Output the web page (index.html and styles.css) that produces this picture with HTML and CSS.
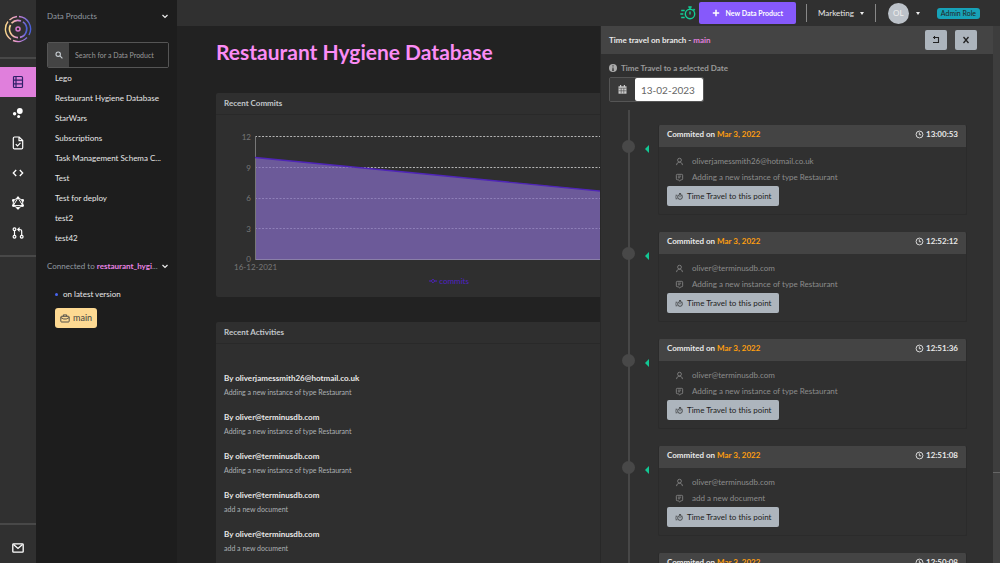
FILE: index.html
```html
<!DOCTYPE html>
<html lang="en">
<head>
<meta charset="utf-8">
<title>Restaurant Hygiene Database</title>
<link rel="stylesheet" href="styles.css">
</head>
<body>
<svg class="sprite" aria-hidden="true">
  <symbol id="chevron" viewBox="0 0 8 8"><path d="M1.500 3 4 5.500l2.500-2.500" fill="none" stroke="currentColor" stroke-width="1.200"/></symbol>
  <symbol id="user" viewBox="0 0 10 10"><circle cx="5" cy="3.500" r="2.100" fill="none" stroke="currentColor" stroke-width=".9"/><path d="M1.800 9c0-2 1.200-3.200 3.200-3.200S8.200 7 8.200 9" fill="none" stroke="currentColor" stroke-width=".9"/></symbol>
  <symbol id="note" viewBox="0 0 10 10"><path d="M2.500 1.500h5q1 0 1 1v4q0 1-1 1h-.8L5 9 3.900 7.500H2.500q-1 0-1-1v-4q0-1 1-1zM3.200 3.500h3.600M3.200 5.300h2.600" fill="none" stroke="currentColor" stroke-width=".9"/></symbol>
  <symbol id="clock" viewBox="0 0 10 10"><circle cx="5" cy="5" r="3.800" fill="none" stroke="currentColor" stroke-width="1"/><path d="M4.800 2.600v2.700h2" fill="none" stroke="currentColor" stroke-width="1"/></symbol>
  <symbol id="stopwatch" viewBox="0 0 16 14"><g fill="none" stroke="currentColor" stroke-width="1.400"><circle cx="10" cy="8" r="4.700"/><path d="M8.300 1h3.400M10 1v2M10 5.500v3M13.500 3l1.300 1.200M1.200 4.500h3.500M.3 8h3M1.200 11.500h3.500"/></g></symbol>
</svg>

<div class="app">
  <nav class="rail" aria-label="Main">
    <a class="logo" href="#" aria-label="Home">
      <svg viewBox="0 0 28 28" width="28" height="28" fill="none" stroke-width="1.400">
        <defs><linearGradient id="ring" x1="0" x2="1"><stop offset="0" stop-color="#fbd98b"/><stop offset=".5" stop-color="#e08ad8"/><stop offset="1" stop-color="#4a5fd8"/></linearGradient></defs>
        <path d="M15 1.500A12.500 12.500 0 0 1 25 20M23 22.500A12.500 12.500 0 0 1 9 25.500M7 24.500A12.500 12.500 0 0 1 4 6.500M5.500 5A12.500 12.500 0 0 1 13 1.500" stroke="url(#ring)"/>
        <path d="M19 6.900A8.600 8.600 0 0 1 16 22.400M14 22.600A8.600 8.600 0 0 1 6.500 10M7.500 8.300A8.600 8.600 0 0 1 17 6" stroke="url(#ring)" stroke-width="1.700"/>
        <circle cx="14" cy="14" r="2" stroke="#d77ad0" stroke-width="1.500"/>
      </svg>
    </a>
    <div class="rail-group">
      <a class="rail-item active" href="#" aria-label="Products"><svg width="12" height="14" viewBox="0 0 12 14" fill="none" stroke="#30206a" stroke-width="1.200"><rect x="1.500" y="1.500" width="9" height="11" rx="1"/><path d="M1.500 5.100h9M1.500 8.800h9M4 1.500v11"/></svg></a>
      <a class="rail-item" href="#" aria-label="Explorer"><svg width="12" height="12" viewBox="0 0 12 12" fill="#fff"><circle cx="7.800" cy="4" r="2.900"/><circle cx="2.600" cy="6.700" r="1.700"/><circle cx="6.600" cy="9.500" r="1.500"/></svg></a>
      <a class="rail-item" href="#" aria-label="Documents"><svg width="12" height="14" viewBox="0 0 12 14" fill="none" stroke="#fff" stroke-width="1.200"><path d="M2.500 1h4.700l3.500 3.500v7.200q0 1.200-1.200 1.200h-7q-1.200 0-1.200-1.200V2.200Q1.300 1 2.500 1zM7 1v3.700h3.700M3.800 8.200l1.700 1.700 3-3"/></svg></a>
      <a class="rail-item" href="#" aria-label="Query"><svg width="12" height="12" viewBox="0 0 12 12" fill="none" stroke="#fff" stroke-width="1.300"><path d="M4.200 3 1.300 6l2.900 3M7.800 3l2.900 3-2.900 3"/></svg></a>
      <a class="rail-item" href="#" aria-label="GraphQL"><svg width="14" height="14" viewBox="0 0 14 14" fill="none" stroke="#fff" stroke-width="1"><path d="M7 1.800l4.700 2.600v5.200L7 12.200 2.300 9.600V4.400zM7 1.800l4.700 7.800H2.300z"/><g fill="#fff" stroke="none"><circle cx="7" cy="1.800" r="1.300"/><circle cx="11.700" cy="4.400" r="1.300"/><circle cx="11.700" cy="9.600" r="1.300"/><circle cx="7" cy="12.200" r="1.300"/><circle cx="2.300" cy="9.600" r="1.300"/><circle cx="2.300" cy="4.400" r="1.300"/></g></svg></a>
      <a class="rail-item" href="#" aria-label="Change requests"><svg width="12" height="12" viewBox="0 0 12 12" fill="none" stroke="#fff" stroke-width="1.200"><circle cx="2.500" cy="2.300" r="1.400"/><circle cx="2.500" cy="9.700" r="1.400"/><circle cx="9.700" cy="9.700" r="1.400"/><path d="M2.500 3.700v4.600M9.700 8.300V4.500q0-2-2-2H6M7.600.7 5.800 2.500l1.800 1.800"/></svg></a>
    </div>
    <a class="rail-mail" href="#" aria-label="Mail"><svg width="12" height="10" viewBox="0 0 12 10" fill="none" stroke="#fff" stroke-width="1.300"><rect x=".8" y=".8" width="10.400" height="8.400" rx=".8"/><path d="M1.500 1.500 6 5.500l4.500-4"/></svg></a>
  </nav>

  <aside class="sidebar">
    <button class="section-toggle">Data Products<svg class="chev"><use href="#chevron"/></svg></button>
    <div class="search">
      <label for="product-search" aria-label="Search"><svg width="8" height="8" viewBox="0 0 8 8" fill="none" stroke="#c8ced3" stroke-width="1.100"><circle cx="3.200" cy="3.200" r="2.200"/><path d="M4.900 4.900 7.400 7.400"/></svg></label>
      <input id="product-search" type="text" placeholder="Search for a Data Product">
    </div>
    <ul class="products">
      <li><a href="#">Lego</a></li>
      <li><a href="#">Restaurant Hygiene Database</a></li>
      <li><a href="#">StarWars</a></li>
      <li><a href="#">Subscriptions</a></li>
      <li><a href="#">Task Management Schema C...</a></li>
      <li><a href="#">Test</a></li>
      <li><a href="#">Test for deploy</a></li>
      <li><a href="#">test2</a></li>
      <li><a href="#">test42</a></li>
    </ul>
    <button class="section-toggle connected"><span>Connected to <b>restaurant_hygi</b>...</span><svg class="chev"><use href="#chevron"/></svg></button>
    <p class="version">on latest version</p>
    <button class="branch"><svg width="10" height="9" viewBox="0 0 10 9" fill="none" stroke="currentColor" stroke-width=".9"><rect x=".8" y="2.300" width="8.400" height="5.700" rx=".8"/><path d="M3.300 2.300V.9h3.400v1.400M.8 3.500 3.700 5h2.600l2.900-1.500"/></svg>main</button>
  </aside>

  <div class="page">
    <header class="topbar">
      <svg class="watch"><use href="#stopwatch"/></svg>
      <button class="new-product"><svg width="8" height="8" viewBox="0 0 8 8" stroke="#fff" stroke-width="1.500"><path d="M4 .8v6.400M.8 4h6.400"/></svg>New Data Product</button>
      <button class="team">Marketing<i class="caret"></i></button>
      <button class="account" aria-label="Account"><span class="avatar">OL</span><i class="caret"></i></button>
      <span class="role">Admin Role</span>
    </header>
    <main class="content">
      <h1>Restaurant Hygiene Database</h1>
      <section class="panel">
        <h2>Recent Commits</h2>
        <div class="chart">
          <div class="y-axis"><span>12</span><span>9</span><span>6</span><span>3</span><span>0</span></div>
          <svg class="plot" viewBox="0 0 416 124" preserveAspectRatio="none" role="img" aria-label="Commits over time">
            <path d="M0 .5h416M0 31.500h416" stroke="#b5b5b5" stroke-dasharray="2 1.500"/>
            <path d="M0 21.500 416 62v61.500H0z" fill="#6c5a99"/>
            <path d="M0 31.500h100M0 62.500h416M0 92.500h416" stroke="#8e7fb8" stroke-dasharray="2 1.500"/>
            <path d="M0 123.500h416" stroke="#8a7fa8"/>
            <path d="M.5 0v124" stroke="#777"/>
            <path d="M0 21.500 416 62" stroke="#4f25b8" stroke-width="1.300"/>
          </svg>
          <div class="x-axis">16-12-2021</div>
        </div>
        <div class="legend"><svg width="8" height="6" viewBox="0 0 8 6" fill="none" stroke="currentColor"><path d="M0 3h2M6 3h2M4 1.200 5.800 3 4 4.800 2.200 3z"/></svg>commits</div>
      </section>
      <section class="panel">
        <h2>Recent Activities</h2>
        <ul class="activities">
          <li><strong>By oliverjamessmith26@hotmail.co.uk</strong><span>Adding a new instance of type Restaurant</span></li>
          <li><strong>By oliver@terminusdb.com</strong><span>Adding a new instance of type Restaurant</span></li>
          <li><strong>By oliver@terminusdb.com</strong><span>Adding a new instance of type Restaurant</span></li>
          <li><strong>By oliver@terminusdb.com</strong><span>add a new document</span></li>
          <li><strong>By oliver@terminusdb.com</strong><span>add a new document</span></li>
        </ul>
      </section>
    </main>
  </div>
</div>

<aside class="drawer" aria-label="Time travel">
  <div class="drawer-main">
    <header class="drawer-head">
      <h2>Time travel on branch - <b>main</b></h2>
      <button aria-label="Reset"><svg width="8" height="8" viewBox="0 0 8 8" fill="none" stroke="#222" stroke-width="1.100"><path d="M1 1.500h5.500v5H1M2.500 0v3"/></svg></button>
      <button aria-label="Close"><svg width="8" height="8" viewBox="0 0 8 8" fill="none" stroke="#222" stroke-width="1.300"><path d="M1.500 1 6.500 7M6.500 1 1.500 7"/></svg></button>
    </header>
    <div class="picker">
      <label for="date"><svg width="8" height="8" viewBox="0 0 8 8"><circle cx="4" cy="4" r="4" fill="#aaa"/><path d="M4 1.300v1.300M4 3.500v3M3 6.300h2" stroke="#303030" stroke-width="1.100"/></svg>Time Travel to a selected Date</label>
      <div class="date-box">
        <span><svg width="9" height="9" viewBox="0 0 9 9"><path d="M.5 1.300h8v7.400h-8z" fill="#ccc"/><path d="M2.600 0v2M6.400 0v2" stroke="#ccc" stroke-width="1.200"/><path d="M.5 3.200h8M.5 5.800h8M3.200 3.200v5.300M5.800 3.200v5.300" stroke="#444" stroke-width=".6"/></svg></span>
        <input id="date" type="text" value="13-02-2023">
      </div>
    </div>
    <ol class="timeline">
      <li>
        <article class="commit">
          <header>Commited on <b>Mar 3, 2022</b><time><svg class="clock"><use href="#clock"/></svg>13:00:53</time></header>
          <p><svg class="ico"><use href="#user"/></svg>oliverjamessmith26@hotmail.co.uk</p>
          <p><svg class="ico"><use href="#note"/></svg>Adding a new instance of type Restaurant</p>
          <button><svg class="mini"><use href="#stopwatch"/></svg>Time Travel to this point</button>
        </article>
      </li>
      <li>
        <article class="commit">
          <header>Commited on <b>Mar 3, 2022</b><time><svg class="clock"><use href="#clock"/></svg>12:52:12</time></header>
          <p><svg class="ico"><use href="#user"/></svg>oliver@terminusdb.com</p>
          <p><svg class="ico"><use href="#note"/></svg>Adding a new instance of type Restaurant</p>
          <button><svg class="mini"><use href="#stopwatch"/></svg>Time Travel to this point</button>
        </article>
      </li>
      <li>
        <article class="commit">
          <header>Commited on <b>Mar 3, 2022</b><time><svg class="clock"><use href="#clock"/></svg>12:51:36</time></header>
          <p><svg class="ico"><use href="#user"/></svg>oliver@terminusdb.com</p>
          <p><svg class="ico"><use href="#note"/></svg>Adding a new instance of type Restaurant</p>
          <button><svg class="mini"><use href="#stopwatch"/></svg>Time Travel to this point</button>
        </article>
      </li>
      <li>
        <article class="commit">
          <header>Commited on <b>Mar 3, 2022</b><time><svg class="clock"><use href="#clock"/></svg>12:51:08</time></header>
          <p><svg class="ico"><use href="#user"/></svg>oliver@terminusdb.com</p>
          <p><svg class="ico"><use href="#note"/></svg>add a new document</p>
          <button><svg class="mini"><use href="#stopwatch"/></svg>Time Travel to this point</button>
        </article>
      </li>
      <li>
        <article class="commit">
          <header>Commited on <b>Mar 3, 2022</b><time><svg class="clock"><use href="#clock"/></svg>12:50:08</time></header>
        </article>
      </li>
    </ol>
  </div>
  <div class="scroll-track"><div class="scroll-thumb"></div></div>
</aside>
</body>
</html>
```
FILE: styles.css
```css
* { box-sizing: border-box; }
body {
  margin: 0;
  background: #222;
  color: #e8e8e8;
  font: 8px/12px Lato, "Open Sans", sans-serif;
  overflow: hidden;
}
h1, h2, p, ul, ol { margin: 0; padding: 0; }
ul, ol { list-style: none; }
a { color: inherit; text-decoration: none; }
button { font: inherit; color: inherit; border: 0; padding: 0; background: none; cursor: pointer; }
input { font: inherit; min-width: 0; border: 0; outline: 0; }
svg { display: block; flex: none; }
b { font-weight: 700; }
.sprite { position: absolute; width: 0; height: 0; }

.app { display: flex; height: 100vh; overflow: hidden; }

.rail {
  width: 36px;
  flex: none;
  display: flex;
  flex-direction: column;
  background: #303030;
}
.logo {
  height: 59px;
  display: flex;
  justify-content: center;
  align-items: center;
  border-bottom: 2px solid #484848;
}
.rail-group { padding: 8px 0 7px; border-bottom: 2px solid #484848; }
.rail-item { height: 30px; display: flex; align-items: center; justify-content: center; }
.rail-item.active { margin-bottom: 1px; background: #e07fdc; }
.rail-mail {
  margin-top: auto;
  height: 40px;
  padding-top: 8px;
  display: flex;
  align-items: center;
  justify-content: center;
  border-top: 2px solid #484848;
}

.sidebar {
  width: 141px;
  flex: none;
  padding: 10px 8px 0 11px;
  background: #1d1d1d;
}
.section-toggle {
  width: 100%;
  display: flex;
  justify-content: space-between;
  align-items: center;
  color: #9199a0;
  white-space: nowrap;
}
.section-toggle b { color: #e884e4; }
.chev { width: 8px; height: 8px; color: #eee; }
.search {
  display: flex;
  height: 26px;
  margin: 20px 0 0;
  border: 1px solid #555;
  border-radius: 2px;
  overflow: hidden;
}
.search label { width: 21px; flex: none; display: flex; align-items: center; justify-content: center; background: #444; }
.search input { flex: 1; padding: 0 6px; background: #1d1d1d; color: #ddd; font-size: 7px; }
.search input::placeholder { color: #9a9a9a; opacity: 1; }
.products { padding: 0 0 0 8px; }
.products a { display: block; line-height: 20px; white-space: nowrap; }
.connected { margin-top: 12px; }
.version { margin: 16px 8px 0; display: flex; align-items: center; gap: 5px; }
.version::before { content: ""; width: 3px; height: 3px; border-radius: 50%; background: #4765f0; }
.branch {
  margin: 8px 8px 0;
  height: 20px;
  padding: 0 5px;
  display: flex;
  align-items: center;
  gap: 3px;
  border-radius: 3px;
  background: #fdd992;
  color: #444;
  font-size: 9px;
}

.page { flex: 1; min-width: 0; }
.topbar {
  height: 26px;
  padding-right: 20px;
  display: flex;
  align-items: center;
  justify-content: flex-end;
  background: #303030;
}
.watch { width: 16px; height: 14px; margin-right: 3px; color: #12cf96; }
.new-product {
  height: 22px;
  padding: 0 13px;
  display: flex;
  align-items: center;
  gap: 6px;
  border-radius: 2px;
  background: #8659fb;
  color: #fff;
  font-size: 7px;
  font-weight: 700;
}
.team, .account { height: 18px; display: flex; align-items: center; border-left: 1px solid #888; }
.team { margin-left: 10px; padding: 0 11px; gap: 6px; }
.account { padding: 0 12px; gap: 7px; }
.avatar { width: 21px; height: 21px; display: grid; place-items: center; border-radius: 50%; background: #bcc2c9; color: #eee; }
.caret { border: 2px solid transparent; border-top: 3px solid #eee; border-bottom: 0; }
.role { margin-left: 5px; height: 11px; padding: 0 4px; line-height: 11px; border-radius: 3px; background: #17a2b8; color: #222; font-size: 7px; }

.content { padding: 14px 7px 0 39px; }
.content h1 { color: #fb8cf5; font-size: 21px; line-height: 24px; font-weight: 700; }
.panel { width: 60%; margin-top: 29px; background: #2f2f2f; border-radius: 2px; }
.panel + .panel { margin-top: 25px; }
.panel h2 { padding: 0 8px; font-size: 8px; line-height: 21px; font-weight: 700; color: #c2c7cb; border-bottom: 1px solid #292929; }
.chart { display: grid; grid-template-columns: 39px 1fr; padding: 21px 10px 0 0; }
.y-axis { display: flex; flex-direction: column; justify-content: space-between; margin: -5px 0; padding-right: 4px; text-align: right; color: #777; }
.plot { width: 100%; height: 124px; }
.x-axis { grid-column: 1 / -1; padding: 1px 0 0 18px; color: #777; }
.legend { display: flex; justify-content: center; align-items: center; gap: 2px; padding: 2px 0 10px; color: #4f22c4; }
.activities { padding: 27px 8px 0; }
.activities li { height: 39px; }
.activities strong, .activities span { display: block; line-height: 14px; }
.activities span { font-size: 7px; color: #adb1b5; }

.drawer {
  position: fixed;
  top: 26px;
  right: 0;
  bottom: 0;
  width: 400px;
  display: flex;
  background: #303030;
  border-left: 1px solid #282828;
  overflow: hidden;
}
.drawer-main { flex: 1; }
.drawer-head { height: 28px; padding: 0 16px 0 8px; display: flex; align-items: center; gap: 8px; background: #444; }
.drawer-head h2 { flex: 1; font-size: 8px; }
.drawer-head b { color: #e07fdc; }
.drawer-head button { width: 22px; height: 20px; display: grid; place-items: center; border-radius: 2px; background: #adb5bd; }
.picker { padding: 8px; }
.picker label { display: flex; align-items: center; gap: 4px; color: #9a9a9a; font-weight: 700; }
.date-box { display: flex; width: 95px; height: 25px; margin-top: 3px; border: 1px solid #555; border-radius: 2px; }
.date-box span { flex: 1; display: grid; place-items: center; background: #3a3a3a; }
.date-box input { width: 68px; padding: 0 6px; border-radius: 2px; background: #fff; color: #666; font-size: 10px; }
.timeline { position: relative; padding: 15px 26px 0 57px; }
.timeline::before { content: ""; position: absolute; left: 27px; top: 0; bottom: 0; width: 2px; background: #474747; }
.timeline li { position: relative; height: 107px; }
.timeline li::before { content: ""; position: absolute; left: -36px; top: 15px; width: 13px; height: 13px; border-radius: 50%; background: #484848; }
.timeline li::after { content: ""; position: absolute; left: -13px; top: 20px; border: 4px solid transparent; border-right-color: #12c794; border-left: 0; }
.commit { height: 90px; border: 1px solid #2b2b2b; border-top: 0; border-radius: 2px; overflow: hidden; }
.commit header { height: 22px; margin-bottom: 6px; padding: 0 8px 4px; display: flex; align-items: center; gap: 2px; background: #444; font-weight: 700; }
.commit header b { color: #ff9f0f; }
.commit time { margin-left: auto; display: flex; align-items: center; gap: 2px; }
.clock { width: 9px; height: 9px; }
.commit p { height: 16px; padding-left: 16px; display: flex; align-items: center; gap: 8px; color: #8c8c8c; }
.ico { width: 9px; height: 9px; }
.commit button { height: 20px; margin: 1px 0 0 8px; padding: 0 8px; display: flex; align-items: center; gap: 4px; border-radius: 2px; background: #adb5bd; color: #222; }
.mini { width: 8px; height: 7px; }
.scroll-track { width: 7px; background: #424242; }
.scroll-thumb { height: 447px; border-bottom: 1px solid #666; background: #3d3d3d; }
```
